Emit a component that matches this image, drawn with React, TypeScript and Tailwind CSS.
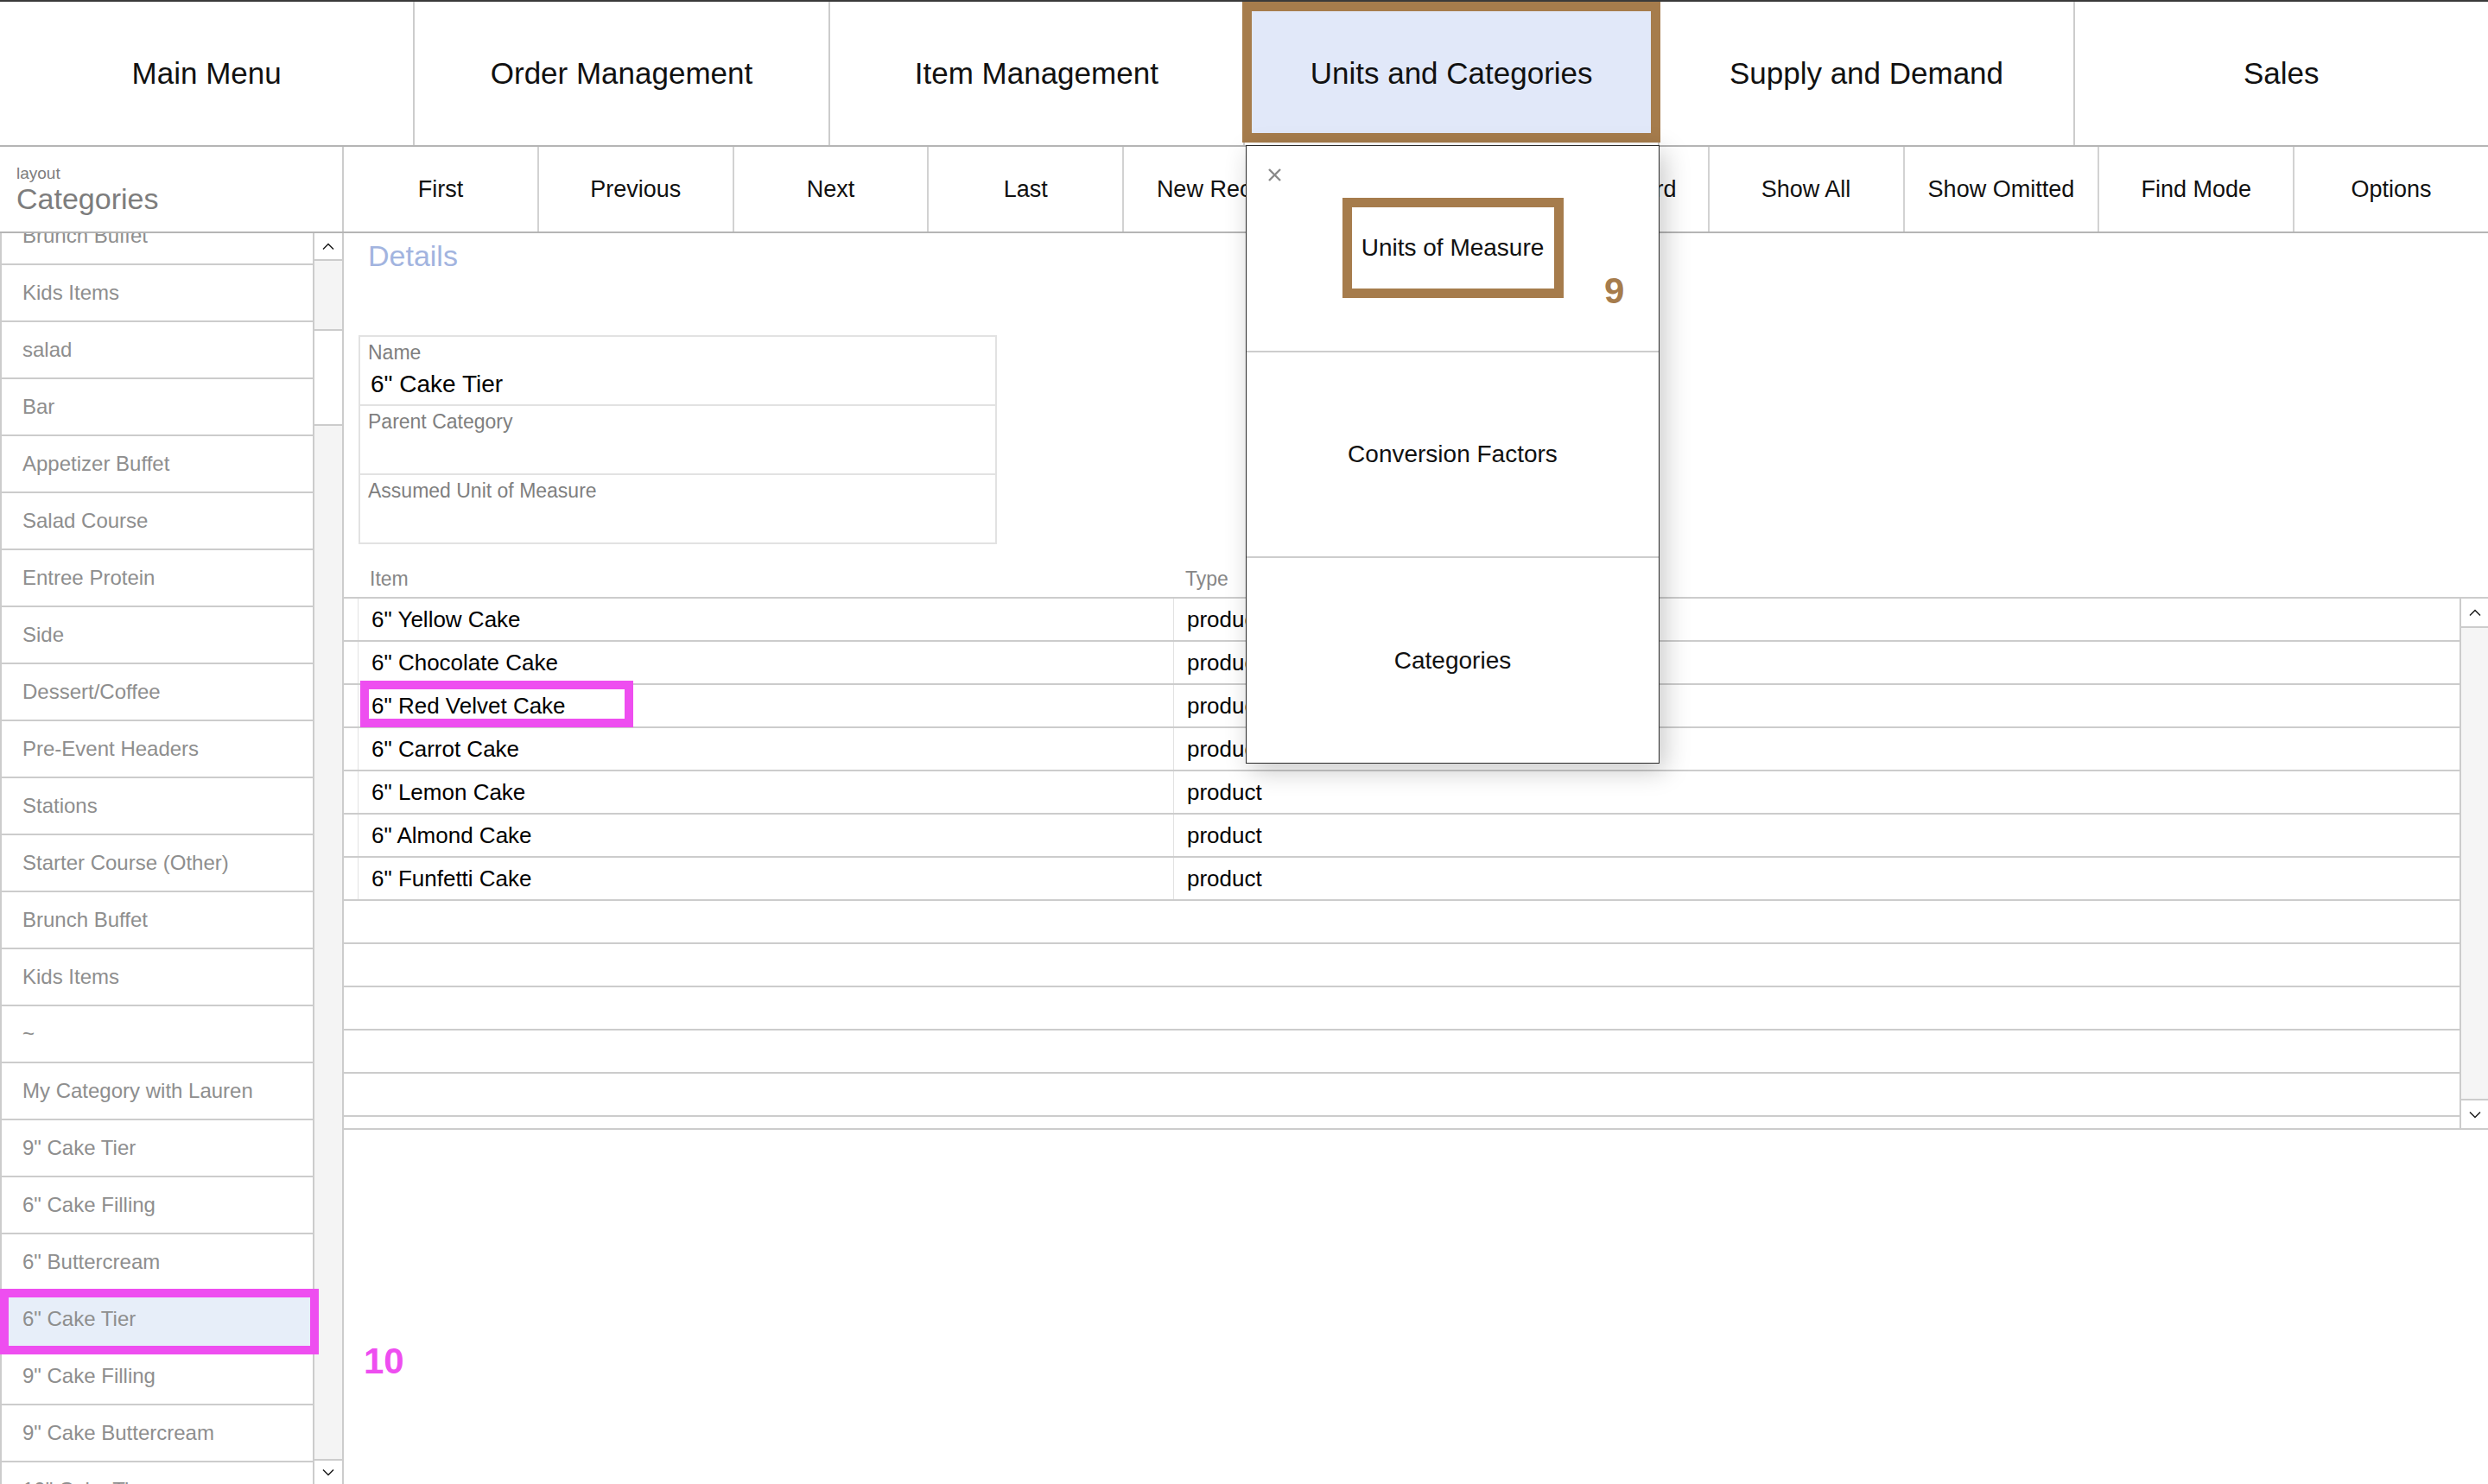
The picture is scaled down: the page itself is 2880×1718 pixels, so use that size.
const NAV = ["Main Menu", "Order Management", "Item Management", "Units and Categories", "Supply and Demand", "Sales"];

const TOOLBAR = ["First", "Previous", "Next", "Last", "New Record", "Delete Record", "Omit Record", "Show All", "Show Omitted", "Find Mode", "Options"];

const CATEGORIES = [
  "Brunch Buffet",
  "Kids Items",
  "salad",
  "Bar",
  "Appetizer Buffet",
  "Salad Course",
  "Entree Protein",
  "Side",
  "Dessert/Coffee",
  "Pre-Event Headers",
  "Stations",
  "Starter Course (Other)",
  "Brunch Buffet",
  "Kids Items",
  "~",
  "My Category with Lauren",
  '9" Cake Tier',
  '6" Cake Filling',
  '6" Buttercream',
  '6" Cake Tier',
  '9" Cake Filling',
  '9" Cake Buttercream',
  '10" Cake Tier',
];

const ITEMS = [
  '6" Yellow Cake',
  '6" Chocolate Cake',
  '6" Red Velvet Cake',
  '6" Carrot Cake',
  '6" Lemon Cake',
  '6" Almond Cake',
  '6" Funfetti Cake',
];

const SELECTED_CATEGORY = 19;

function Chevron({ down = false }: { down?: boolean }) {
  return (
    <svg width="14" height="9" viewBox="0 0 14 9" className="block">
      <polyline
        points={down ? "1,1.5 7,7.5 13,1.5" : "1,7.5 7,1.5 13,7.5"}
        fill="none"
        stroke="#1a1a1a"
        strokeWidth="1.5"
      />
    </svg>
  );
}

export default function App() {
  return (
    <div className="relative flex h-[1718px] w-[2880px] flex-col overflow-hidden bg-white font-['Liberation_Sans',Arial,sans-serif] text-[#111]">
      {/* Top navigation */}
      <div className="flex h-[170px] shrink-0 border-t-2 border-b-2 border-t-[#3a3a3a] border-b-[#b5b5b5]">
        {NAV.map((label, i) => (
          <div
            key={label}
            className={`relative flex flex-1 items-center justify-center text-[35px] ${i < NAV.length - 1 ? "border-r-2 border-[#cccccc]" : ""}`}
          >
            {i === 3 && (
              <div className="absolute left-[-3px] top-0 h-[163px] w-[484px] border-[11px] border-[#a67c4c] bg-[#e1e8f9]" />
            )}
            <span className="relative">{label}</span>
          </div>
        ))}
      </div>

      {/* Toolbar */}
      <div className="flex h-[100px] shrink-0 border-b-2 border-[#b5b5b5]">
        <div className="flex w-[398px] shrink-0 flex-col justify-center border-r-2 border-[#cccccc] px-[19px] pt-[2px]">
          <span className="text-[19px] leading-[20px] text-[#7d7d7d]">layout</span>
          <span className="text-[34px] leading-[38px] text-[#7d7d7d]">Categories</span>
        </div>
        {TOOLBAR.map((label, i) => (
          <div
            key={label}
            className={`flex flex-1 items-center justify-center text-[27px] ${i < TOOLBAR.length - 1 ? "border-r-2 border-[#d2d2d2]" : ""}`}
          >
            {label}
          </div>
        ))}
      </div>

      {/* Body */}
      <div className="flex min-h-0 flex-1">
        {/* Category list */}
        <div className="relative flex w-[398px] shrink-0 overflow-hidden border-r-2 border-[#cccccc]">
          <div className="w-[364px] shrink-0 border-x-2 border-[#cccccc]">
            <div className="mt-[-29px]">
              {CATEGORIES.map((name, i) => (
                <div
                  key={i}
                  className={`relative flex h-[66px] items-center border-b-2 border-[#cccccc] pl-[24px] text-[24px] text-[#8e8e8e] ${i === SELECTED_CATEGORY ? "bg-[#e7eef9]" : ""}`}
                >
                  {name}
                  {i === SELECTED_CATEGORY && (
                    <div className="absolute left-[-2px] top-[-3px] h-[76px] w-[369px] border-[10px] border-[#ee4ef0]" />
                  )}
                </div>
              ))}
            </div>
          </div>
          <div className="flex flex-1 flex-col bg-[#f4f4f4]">
            <div className="flex h-[32px] shrink-0 items-center justify-center border-b-2 border-[#cccccc] bg-white">
              <Chevron />
            </div>
            <div className="h-[79px] shrink-0" />
            <div className="h-[112px] shrink-0 border-y-2 border-[#cccccc] bg-white" />
            <div className="flex-1" />
            <div className="flex h-[29px] shrink-0 items-center justify-center border-t-2 border-[#cccccc] bg-white">
              <Chevron down />
            </div>
          </div>
        </div>

        {/* Details */}
        <div className="relative flex min-w-0 flex-1 flex-col">
          <h2 className="pl-[28px] pt-[6px] text-[34px] leading-[40px] text-[#a2b4df]">Details</h2>

          <div className="ml-[17px] mt-[72px] w-[739px] border-2 border-[#e2e2e2]">
            <div className="h-[78px] px-[9px] pt-[5px]">
              <div className="text-[23px] leading-[26px] text-[#7f7f7f]">Name</div>
              <div className="pl-[3px] pt-[8px] text-[28px] leading-[32px] text-black">6" Cake Tier</div>
            </div>
            <div className="h-[80px] border-t-2 border-[#e2e2e2] px-[9px] pt-[5px]">
              <div className="text-[23px] leading-[26px] text-[#7f7f7f]">Parent Category</div>
            </div>
            <div className="h-[80px] border-t-2 border-[#e2e2e2] px-[9px] pt-[5px]">
              <div className="text-[23px] leading-[26px] text-[#7f7f7f]">Assumed Unit of Measure</div>
            </div>
          </div>

          <div className="flex h-[61px] items-end pb-[8px] text-[23px] leading-[26px] text-[#878787]">
            <span className="w-[960px] pl-[30px]">Item</span>
            <span className="pl-[14px]">Type</span>
          </div>

          <div className="flex h-[617px] border-y-2 border-[#cccccc]">
            <div className="min-w-0 flex-1 overflow-hidden">
              {Array.from({ length: 13 }).map((_, i) => {
                const item = ITEMS[i];
                return (
                  <div key={i} className="flex h-[50px] shrink-0 border-b-2 border-[#cccccc] text-[26px] text-black">
                    {item && (
                      <>
                        <div className="w-[16px] shrink-0" />
                        <div className="relative flex w-[944px] shrink-0 items-center border-l border-[#e2e2e2] pl-[15px]">
                          {item}
                          {i === 2 && (
                            <div className="absolute left-[2px] top-[-5px] h-[54px] w-[316px] border-[10px] border-[#ee4ef0]" />
                          )}
                        </div>
                        <div className="flex flex-1 items-center border-l border-[#e2e2e2] pl-[15px]">product</div>
                      </>
                    )}
                  </div>
                );
              })}
            </div>
            <div className="flex w-[33px] shrink-0 flex-col border-l-2 border-[#cccccc] bg-[#f5f5f5]">
              <div className="flex h-[34px] items-center justify-center border-b-2 border-[#cccccc] bg-white">
                <Chevron />
              </div>
              <div className="flex-1" />
              <div className="flex h-[34px] items-center justify-center border-t-2 border-[#cccccc] bg-white">
                <Chevron down />
              </div>
            </div>
          </div>

          <span className="absolute left-[23px] top-[1285px] text-[42px] font-bold leading-[42px] text-[#ee4ef0]">10</span>
        </div>
      </div>

      {/* Units and Categories popover */}
      <div className="absolute left-[1442px] top-[168px] flex h-[716px] w-[479px] flex-col border border-[#2a2a2a] bg-white shadow-[6px_8px_28px_rgba(0,0,0,0.22)]">
        <div className="relative flex flex-1 items-center justify-center">
          <svg width="17" height="17" viewBox="0 0 17 17" className="absolute left-[24px] top-[25px]">
            <line x1="2" y1="2" x2="15" y2="15" stroke="#8a8a8a" strokeWidth="2.4" />
            <line x1="15" y1="2" x2="2" y2="15" stroke="#8a8a8a" strokeWidth="2.4" />
          </svg>
          <div className="flex h-[116px] w-[256px] items-center justify-center border-[11px] border-[#a67c4c] text-[28px]">
            Units of Measure
          </div>
          <span className="absolute left-[414px] top-[147px] text-[42px] font-bold leading-[42px] text-[#a67c4c]">9</span>
        </div>
        <div className="flex flex-1 items-center justify-center border-t-2 border-[#cdcdcd] text-[28px]">
          Conversion Factors
        </div>
        <div className="flex flex-1 items-center justify-center border-t-2 border-[#cdcdcd] text-[28px]">
          Categories
        </div>
      </div>
    </div>
  );
}
